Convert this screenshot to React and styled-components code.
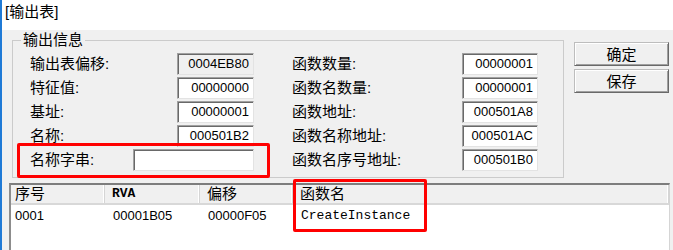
import React from "react";
import styled, { createGlobalStyle } from "styled-components";

const GlobalStyle = createGlobalStyle`
  body {
    margin: 0;
    background: #f0f0f0;
  }
`;

const leftFields = [
  { label: "输出表偏移:", value: "0004EB80", readOnly: true },
  { label: "特征值:", value: "00000000" },
  { label: "基址:", value: "00000001" },
  { label: "名称:", value: "000501B2" },
];

const rightFields = [
  { label: "函数数量:", value: "00000001" },
  { label: "函数名数量:", value: "00000001" },
  { label: "函数地址:", value: "000501A8" },
  { label: "函数名称地址:", value: "000501AC" },
  { label: "函数名序号地址:", value: "000501B0" },
];

const columns = [
  { title: "序号", first: true },
  { title: "RVA", mono: true },
  { title: "偏移" },
  { title: "函数名" },
];

const rows = [["0001", "00001B05", "00000F05", "CreateInstance"]];

const App = () => {
  return (
    <Root>
      <GlobalStyle />
      <Title>[输出表]</Title>
      <Top>
        <Group>
          <Legend>输出信息</Legend>
          <Fields>
            <Column>
              {leftFields.map((f) => (
                <Field key={f.label}>
                  <Label $w={147}>{f.label}</Label>
                  <Box $w={77} $readOnly={f.readOnly}>
                    {f.value}
                  </Box>
                </Field>
              ))}
              <Field>
                <Label $w={103}>名称字串:</Label>
                <Box $w={121} />
              </Field>
            </Column>
            <Column $offset={38}>
              {rightFields.map((f) => (
                <Field key={f.label}>
                  <Label $w={170}>{f.label}</Label>
                  <Box $w={76}>{f.value}</Box>
                </Field>
              ))}
            </Column>
          </Fields>
        </Group>
        <Side>
          <Button>确定</Button>
          <Button>保存</Button>
        </Side>
      </Top>
      <ListView>
        <Header>
          {columns.map((c) => (
            <HeadCell key={c.title} $first={c.first} $mono={c.mono}>
              {c.title}
            </HeadCell>
          ))}
        </Header>
        {rows.map((r) => (
          <Row key={r[0]}>
            {r.map((v, i) => (
              <Cell key={i} $first={i === 0} $mono={i === 3}>
                {v}
              </Cell>
            ))}
          </Row>
        ))}
      </ListView>
      <Mark $left={15} $top={143} $w={253} $h={35} />
      <Mark $left={291} $top={179} $w={134} $h={53} />
    </Root>
  );
};

const Root = styled.div`
  position: relative;
  width: 673px;
  height: 250px;
  box-sizing: border-box;
  border-left: 2px solid #1f7ad6;
  background: #f0f0f0;
  overflow: hidden;
  color: #000;
  font-family: "Liberation Sans", "Noto Sans CJK SC", sans-serif;
`;

const Title = styled.div`
  height: 30px;
  box-sizing: border-box;
  padding: 3px 0 0 3px;
  background: #fff;
  font-size: 15px;
  line-height: 18px;
`;

const Top = styled.div`
  display: flex;
  align-items: flex-start;
  padding-left: 10px;
`;

const Group = styled.fieldset`
  margin: 2px 0 0;
  padding: 0;
  width: 552px;
  height: 146px;
  box-sizing: border-box;
  border: 1px solid #cbcbcb;
  min-width: 0;
`;

const Legend = styled.legend`
  margin-left: 8px;
  padding: 0 2px;
  font-size: 15px;
  line-height: 16px;
`;

const Fields = styled.div`
  display: flex;
  align-items: flex-start;
  padding: 5px 0 0 17px;
`;

const Column = styled.div`
  display: grid;
  grid-auto-rows: 22px;
  row-gap: 2px;
  margin-left: ${(p) => p.$offset || 0}px;
`;

const Field = styled.div`
  display: flex;
  align-items: center;
`;

const Label = styled.span`
  width: ${(p) => p.$w}px;
  flex: none;
  font-size: 15px;
  line-height: 22px;
  white-space: nowrap;
`;

const Box = styled.div`
  width: ${(p) => p.$w}px;
  height: 22px;
  box-sizing: border-box;
  border: 1px solid;
  border-color: #a0a0a0 #e3e3e3 #e3e3e3 #a0a0a0;
  box-shadow: inset 1px 1px #696969;
  background: ${(p) => (p.$readOnly ? "#f0f0f0" : "#fff")};
  padding: 1px 4px 0 0;
  text-align: right;
  font-size: 13px;
  line-height: 18px;
`;

const Side = styled.div`
  display: flex;
  flex-direction: column;
  gap: 3px;
  margin: 12px 0 0 10px;
`;

const Button = styled.button`
  width: 95px;
  height: 24px;
  padding: 0;
  box-sizing: border-box;
  border: 1px solid;
  border-color: #bdbdbd #696969 #696969 #bdbdbd;
  box-shadow: inset 1px 1px #fff, inset -1px -1px #a0a0a0;
  background: #f0f0f0;
  color: #000;
  font-family: "Noto Sans CJK SC", sans-serif;
  font-size: 15px;
  line-height: 20px;
`;

const ListView = styled.div`
  margin: 5px 0 0 7px;
  width: 661px;
  height: 80px;
  box-sizing: border-box;
  background: #fff;
  border-top: 2px solid #7d7d7d;
  border-left: 2px solid #8c8c8c;
  border-right: 1px solid #d5d5d5;
`;

const grid = `
  display: grid;
  grid-template-columns: 94px 95px 93px 1fr;
`;

const Header = styled.div`
  ${grid}
  height: 20px;
  box-sizing: border-box;
  background: #f0f0f0;
  border-bottom: 2px solid #d8d8d8;
`;

const HeadCell = styled.div`
  padding-left: ${(p) => (p.$first ? 4 : 7)}px;
  border-right: 1px solid #d5d5d5;
  box-shadow: inset -1px 0 #fff;
  white-space: nowrap;
  font-family: ${(p) =>
    p.$mono
      ? `"Liberation Mono", monospace`
      : `"Liberation Sans", "Noto Sans CJK SC", sans-serif`};
  font-size: ${(p) => (p.$mono ? 13 : 15)}px;
  font-weight: ${(p) => (p.$mono ? 700 : 400)};
  line-height: 18px;
`;

const Row = styled.div`
  ${grid}
  height: 21px;
`;

const Cell = styled.div`
  padding-left: ${(p) => (p.$first ? 4 : 8)}px;
  white-space: nowrap;
  font-family: ${(p) =>
    p.$mono ? `"Liberation Mono", monospace` : `"Liberation Sans", sans-serif`};
  font-size: 13px;
  line-height: 21px;
`;

const Mark = styled.div`
  position: absolute;
  left: ${(p) => p.$left}px;
  top: ${(p) => p.$top}px;
  width: ${(p) => p.$w}px;
  height: ${(p) => p.$h}px;
  box-sizing: border-box;
  border: 3px solid #ff0000;
  border-radius: 2px;
  pointer-events: none;
`;

export default App;
